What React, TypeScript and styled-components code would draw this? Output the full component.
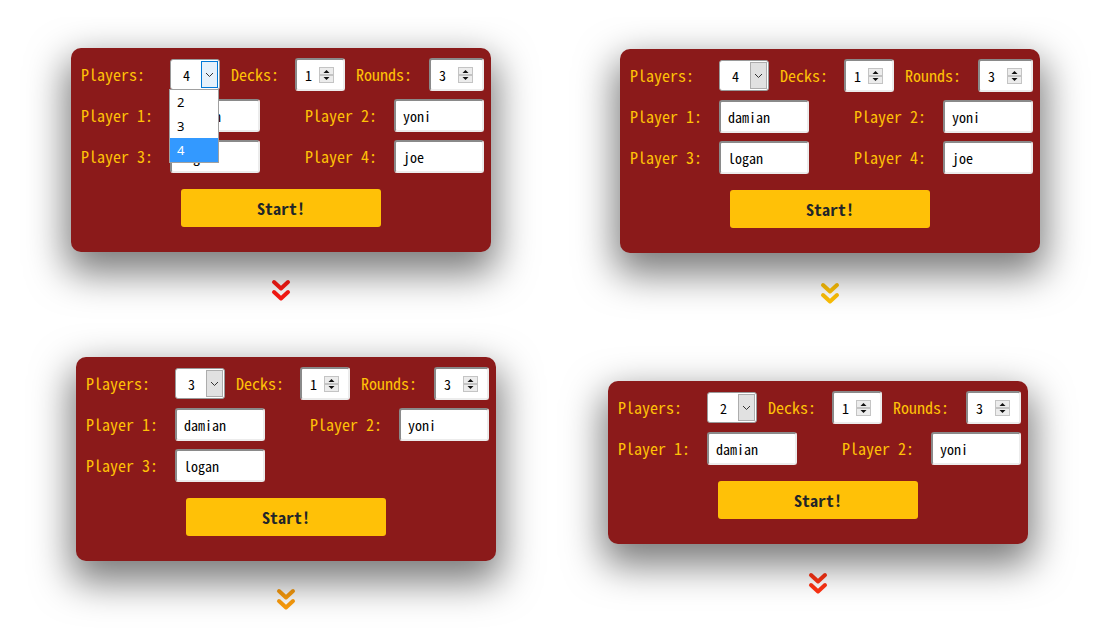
import React from "react"
import styled, { createGlobalStyle } from "styled-components"

const GlobalStyle = createGlobalStyle`
  html, body {
    margin: 0;
    padding: 0;
    background: #fff;
  }
  body {
    width: 1094px;
    height: 643px;
    overflow: hidden;
  }
`

const MONO = `"Noto Sans Mono CJK JP", "Noto Sans CJK JP", "DejaVu Sans Mono", monospace`

const Board = styled.div`
  display: grid;
  grid-template-columns: 550px 544px;
  grid-template-rows: 306px 320px;
  padding-top: 17px;
  width: 1094px;
  height: 643px;
  box-sizing: border-box;
`

type TileProps = { $top: number; $left: number }

const Tile = styled.div<TileProps>`
  overflow: hidden;
  background: #fff;
  padding: ${p => p.$top}px 0 0 ${p => p.$left}px;
  box-sizing: border-box;
`

const Stack = styled.div`
  width: 420px;
  display: flex;
  flex-direction: column;
  align-items: center;
`

const Card = styled.div`
  position: relative;
  width: 420px;
  box-sizing: border-box;
  padding: 10px 7px 25px 10px;
  background: #8b1a1a;
  border-radius: 10px;
  box-shadow: 0 16px 38px 5px rgba(0, 0, 0, 0.52);
  display: flex;
  flex-direction: column;
  font-family: ${MONO};
`

const SettingsRow = styled.div`
  display: flex;
  align-items: center;
  height: 33px;
`

const Label = styled.span<{ $w: number; $ml?: number }>`
  width: ${p => p.$w}px;
  margin-left: ${p => p.$ml || 0}px;
  margin-top: -2px;
  flex-shrink: 0;
  color: #ffc107;
  font-size: 16px;
  line-height: 20px;
  white-space: pre;
`

const SelectBox = styled.div<{ $open: boolean }>`
  position: relative;
  box-sizing: border-box;
  width: 50px;
  height: 31px;
  background: #fff;
  border: 1px solid #9a9a9a;
  border-radius: 3px;
  display: flex;
  align-items: center;
  justify-content: space-between;
  padding: 0 1px 0 12px;
  font-size: 14px;
  color: #000;
  z-index: ${p => (p.$open ? 2 : 0)};
`

const SelectButton = styled.span<{ $open: boolean }>`
  box-sizing: border-box;
  width: 17px;
  height: 27px;
  border: 1px solid ${p => (p.$open ? "#0078d7" : "#adadad")};
  background: ${p => (p.$open ? "#e5f1fb" : "#e1e1e1")};
  display: flex;
  align-items: center;
  justify-content: center;
`

const OptionList = styled.ul`
  position: absolute;
  top: 29px;
  left: -2px;
  width: 50px;
  margin: 0;
  padding: 0;
  list-style: none;
  background: #fff;
  border: 1px solid #a0a0a0;
  box-sizing: border-box;
  font-family: "Noto Sans", "Liberation Sans", sans-serif;
  font-size: 13px;
`

const OptionItem = styled.li<{ $active: boolean }>`
  height: 24px;
  line-height: 24px;
  padding-left: 7px;
  background: ${p => (p.$active ? "#3399ff" : "#fff")};
  color: ${p => (p.$active ? "#fff" : "#000")};
`

const NumberBox = styled.div<{ $w: number }>`
  box-sizing: border-box;
  width: ${p => p.$w}px;
  height: 33px;
  background: #fff;
  border: 2px solid;
  border-color: #8a8a8a #ececec #ececec #8a8a8a;
  border-radius: 3px;
  display: flex;
  align-items: center;
  justify-content: space-between;
  padding: 0 9px 0 8px;
  font-size: 14px;
  color: #000;
`

const PlayerGrid = styled.div`
  display: grid;
  grid-template-columns: repeat(2, 179px);
  justify-content: space-between;
  row-gap: 8px;
  margin-top: 8px;
`

const PlayerField = styled.div`
  display: flex;
  align-items: center;
`

const NameInput = styled.input`
  box-sizing: border-box;
  width: 90px;
  height: 33px;
  margin: 0;
  background: #fff;
  border: 2px solid;
  border-color: #8a8a8a #ececec #ececec #8a8a8a;
  border-radius: 3px;
  padding: 0 0 0 7px;
  font-family: ${MONO};
  font-size: 14px;
  color: #000;
  outline: none;
`

const StartButton = styled.button`
  align-self: flex-start;
  width: 200px;
  height: 38px;
  margin: 16px 0 0 100px;
  border: none;
  border-radius: 3px;
  background: #ffc107;
  color: #212529;
  font-family: ${MONO};
  font-weight: bold;
  font-size: 16px;
`

const Arrow = styled.svg<{ $gap: number }>`
  margin-top: ${p => p.$gap}px;
  display: block;
`

const Spinner = () => (
  <svg width="15" height="16" viewBox="0 0 15 16">
    <rect x="0.5" y="0.5" width="14" height="15" fill="#ececec" stroke="#c4c4c4" />
    <line x1="1" y1="8" x2="14" y2="8" stroke="#9a9a9a" />
    <path d="M4.5 6 L7.5 3 L10.5 6 Z" fill="#111" />
    <path d="M4.5 10 L7.5 13 L10.5 10 Z" fill="#111" />
  </svg>
)

const Caret = () => (
  <svg width="9" height="6" viewBox="0 0 9 6">
    <path d="M1 1 L4.5 4.5 L8 1" fill="none" stroke="#333" strokeWidth="1" />
  </svg>
)

const DoubleChevron = ({ color, gap }: { color: string; gap: number }) => (
  <Arrow $gap={gap} width="20" height="24" viewBox="0 0 20 24">
    <g fill="none" stroke={color} strokeWidth="4" strokeLinecap="round" strokeLinejoin="round">
      <path d="M3 3 L10 9.5 L17 3" />
      <path d="M3 13 L10 19.5 L17 13" />
    </g>
  </Arrow>
)

const NAMES = ["damian", "yoni", "logan", "joe"]

type Setup = {
  players: number
  open: boolean
  color: string
  top: number
  left: number
  gap: number
}

const SETUPS: Setup[] = [
  { players: 4, open: true, color: "#ff1a14", top: 31, left: 71, gap: 27 },
  { players: 4, open: false, color: "#ffc107", top: 32, left: 70, gap: 29 },
  { players: 3, open: false, color: "#ff9f0d", top: 34, left: 76, gap: 27 },
  { players: 2, open: false, color: "#ff3314", top: 58, left: 58, gap: 28 },
]

const SetupCard: React.FC<{ setup: Setup }> = ({ setup }) => {
  const names = NAMES.slice(0, setup.players)
  return (
    <Tile $top={setup.top} $left={setup.left}>
      <Stack>
        <Card>
          <SettingsRow>
            <Label $w={89}>Players:</Label>
            <SelectBox $open={setup.open}>
              <span>{setup.players}</span>
              <SelectButton $open={setup.open}>
                <Caret />
              </SelectButton>
              {setup.open && (
                <OptionList>
                  {[2, 3, 4].map(n => (
                    <OptionItem key={n} $active={n === setup.players}>
                      {n}
                    </OptionItem>
                  ))}
                </OptionList>
              )}
            </SelectBox>
            <Label $w={64} $ml={11}>Decks:</Label>
            <NumberBox $w={50}>
              <span>1</span>
              <Spinner />
            </NumberBox>
            <Label $w={73} $ml={11}>Rounds:</Label>
            <NumberBox $w={55}>
              <span>3</span>
              <Spinner />
            </NumberBox>
          </SettingsRow>
          <PlayerGrid>
            {names.map((name, i) => (
              <PlayerField key={name}>
                <Label $w={89}>{`Player ${i + 1}:`}</Label>
                <NameInput readOnly value={name} />
              </PlayerField>
            ))}
          </PlayerGrid>
          <StartButton>Start!</StartButton>
        </Card>
        <DoubleChevron color={setup.color} gap={setup.gap} />
      </Stack>
    </Tile>
  )
}

export default function App() {
  return (
    <>
      <GlobalStyle />
      <Board>
        {SETUPS.map((s, i) => (
          <SetupCard key={i} setup={s} />
        ))}
      </Board>
    </>
  )
}
